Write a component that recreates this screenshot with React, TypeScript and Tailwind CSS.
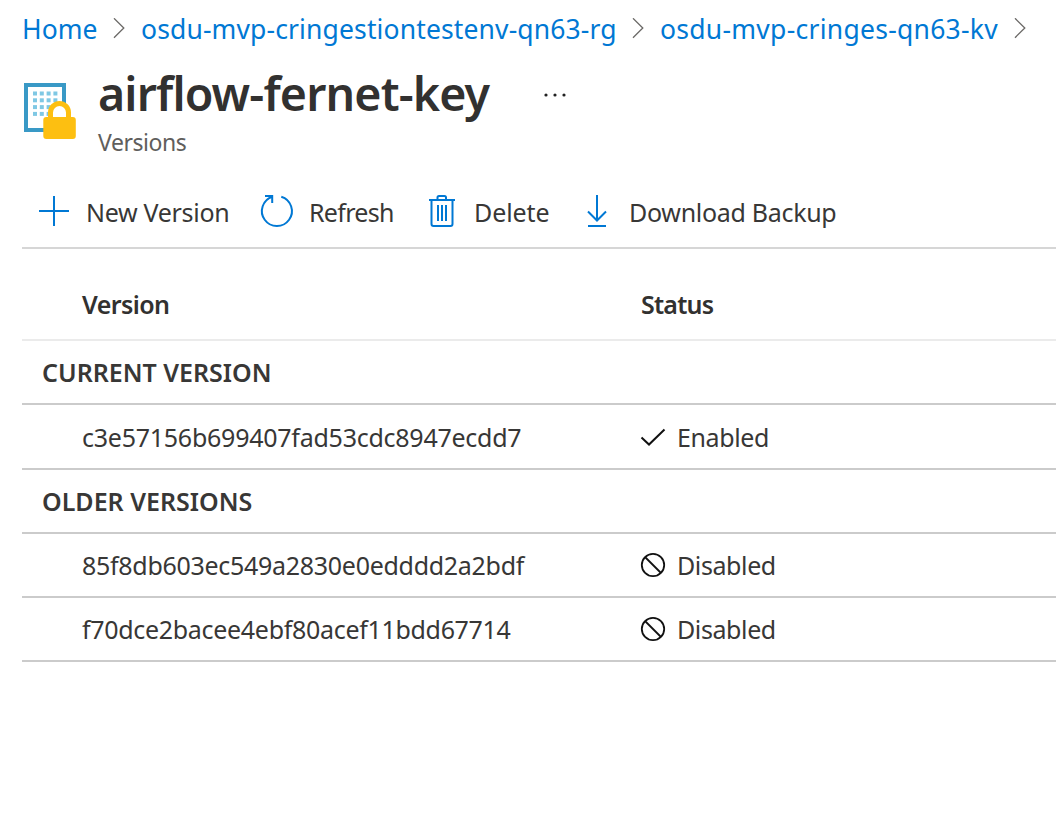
import type { ReactNode } from "react";

function Chevron() {
  return (
    <svg className="h-[22px] w-[14px] shrink-0" viewBox="0 0 14 22" fill="none" stroke="#6b6967" strokeWidth="1.3">
      <path d="M2 0.3 11.8 10 2 19.7" />
    </svg>
  );
}

function VaultKeyIcon() {
  const steps = [0, 1, 2, 3];
  return (
    <svg className="h-[58px] w-[54px] shrink-0" viewBox="0 0 54 58" fill="none">
      <rect x="4" y="3" width="38" height="45" fill="#fff" stroke="#3999c6" strokeWidth="4" />
      {steps.map((row) =>
        steps.map((col) => (
          <rect key={`${row}-${col}`} x={11 + col * 6.8} y={9.5 + row * 6.8} width="4" height="4" fill="#7fc8e4" />
        )),
      )}
      <path d="M28.5 36V30.5a9 9 0 0 1 18 0V36" fill="#fff" stroke="#fdbf11" strokeWidth="5" />
      <rect x="21.3" y="35" width="32.5" height="22" rx="3" fill="#fdbf11" />
    </svg>
  );
}

const icons: Record<string, ReactNode> = {
  add: <path d="M1 17H31M16 2V32" />,
  refresh: (
    <>
      <path d="M20.3 2.7A15 15 0 1 1 11.5 2.7" />
      <path d="M4 2H11.2V9" />
    </>
  ),
  trash: (
    <>
      <path d="M3 6H29M11.5 5.5V3.5Q11.5 2 13 2H18.5Q20 2 20 3.5V5.5" />
      <path d="M5.5 6.5V30Q5.5 32 7.5 32H24.5Q26.5 32 26.5 30V6.5M12 11V27M16 11V27M20 11V27" />
    </>
  ),
  download: <path d="M16 1V27M7 17.5 16 26.5 25 17.5M7 32H25" />,
};

function ToolIcon({ name }: { name: string }) {
  return (
    <svg className="h-[34px] w-8 shrink-0 overflow-visible" viewBox="0 0 32 34" fill="none" stroke="#0078d4" strokeWidth="2">
      {icons[name]}
    </svg>
  );
}

function Status({ enabled }: { enabled: boolean }) {
  return (
    <div className="flex items-center">
      <svg className="mr-[11px] h-[26px] w-[26px]" viewBox="0 0 26 26" fill="none" stroke="#111" strokeWidth="2">
        {enabled ? (
          <path d="M1.5 13.5 9 20.5 24.5 5.5" />
        ) : (
          <>
            <circle cx="13" cy="13" r="11.2" strokeWidth="1.8" />
            <path d="M5 5 21 21" strokeWidth="1.8" />
          </>
        )}
      </svg>
      <span className="tracking-[-0.4px]">{enabled ? "Enabled" : "Disabled"}</span>
    </div>
  );
}

export default function App() {
  return (
    <div className="h-[828px] w-[1056px] overflow-hidden whitespace-nowrap bg-white pl-[22px] font-['Noto_Sans',sans-serif] text-[25px] leading-[34px] text-[#383736]">
      <nav className="flex h-[58px] items-center text-[26.5px] text-[#0078d4]">
        <a className="w-[90px]">Home</a>
        <Chevron />
        <a className="ml-[15px] w-[490px] tracking-[0.13px]">osdu-mvp-cringestiontestenv-qn63-rg</a>
        <Chevron />
        <a className="ml-[15px] w-[353px] tracking-[0.27px]">osdu-mvp-cringes-qn63-kv</a>
        <Chevron />
      </nav>

      <header className="flex h-[126px]">
        <div className="mt-6 w-[76px]">
          <VaultKeyIcon />
        </div>
        <div>
          <div className="flex h-[70px] items-center">
            <h1 className="w-[444px] text-[46.5px] font-semibold leading-[70px] tracking-[-0.85px] text-[#323130]">airflow-fernet-key</h1>
            <svg className="h-2 w-7" viewBox="0 0 28 8" fill="#222">
              <circle cx="4" cy="6" r="1.6" />
              <circle cx="13" cy="6" r="1.6" />
              <circle cx="22" cy="6" r="1.6" />
            </svg>
          </div>
          <div className="-mt-px text-[23px] leading-[30px] tracking-[-0.45px] text-[#605e5c]">Versions</div>
        </div>
      </header>

      <div className="flex h-[65px] items-center border-b-2 border-[#d6d6d6] pb-[9px] pl-4">
        <div className="flex w-[223px] items-center gap-4"><ToolIcon name="add" /><span className="pt-0.5 tracking-[-0.3px]">New Version</span></div>
        <div className="flex w-[165px] items-center gap-4"><ToolIcon name="refresh" /><span className="pt-0.5 tracking-[-0.7px]">Refresh</span></div>
        <div className="flex w-[155px] items-center gap-4"><ToolIcon name="trash" /><span className="pt-0.5 tracking-[-0.1px]">Delete</span></div>
        <div className="flex items-center gap-4"><ToolIcon name="download" /><span className="pt-0.5 tracking-[-0.3px]">Download Backup</span></div>
      </div>

      <div className="flex h-[92px] items-center border-b-2 border-[#ebebeb] pl-[60px] pt-5 font-semibold text-[#323130]">
        <div className="w-[559px] tracking-[-0.6px]">Version</div>
        <div className="tracking-[-0.8px]">Status</div>
      </div>
      <div className="flex h-16 items-center border-b-2 border-[#cbcbcb] pl-5 font-semibold">
        <span>CURRENT VERSION</span>
      </div>
      <div className="flex h-[65px] items-center border-b-2 border-[#cbcbcb] pl-[60px] pt-px">
        <div className="w-[558px] tracking-[-0.25px]"><span>c3e57156b699407fad53cdc8947ecdd7</span></div>
        <Status enabled />
      </div>
      <div className="flex h-16 items-center border-b-2 border-[#cbcbcb] pl-5 font-semibold">
        <span>OLDER VERSIONS</span>
      </div>
      <div className="flex h-16 items-center border-b-2 border-[#cbcbcb] pl-[60px]">
        <div className="w-[558px] tracking-[-0.29px]"><span>85f8db603ec549a2830e0edddd2a2bdf</span></div>
        <Status enabled={false} />
      </div>
      <div className="flex h-16 items-center border-b-2 border-[#cbcbcb] pl-[60px]">
        <div className="w-[558px] tracking-[-0.31px]"><span>f70dce2bacee4ebf80acef11bdd67714</span></div>
        <Status enabled={false} />
      </div>
    </div>
  );
}
